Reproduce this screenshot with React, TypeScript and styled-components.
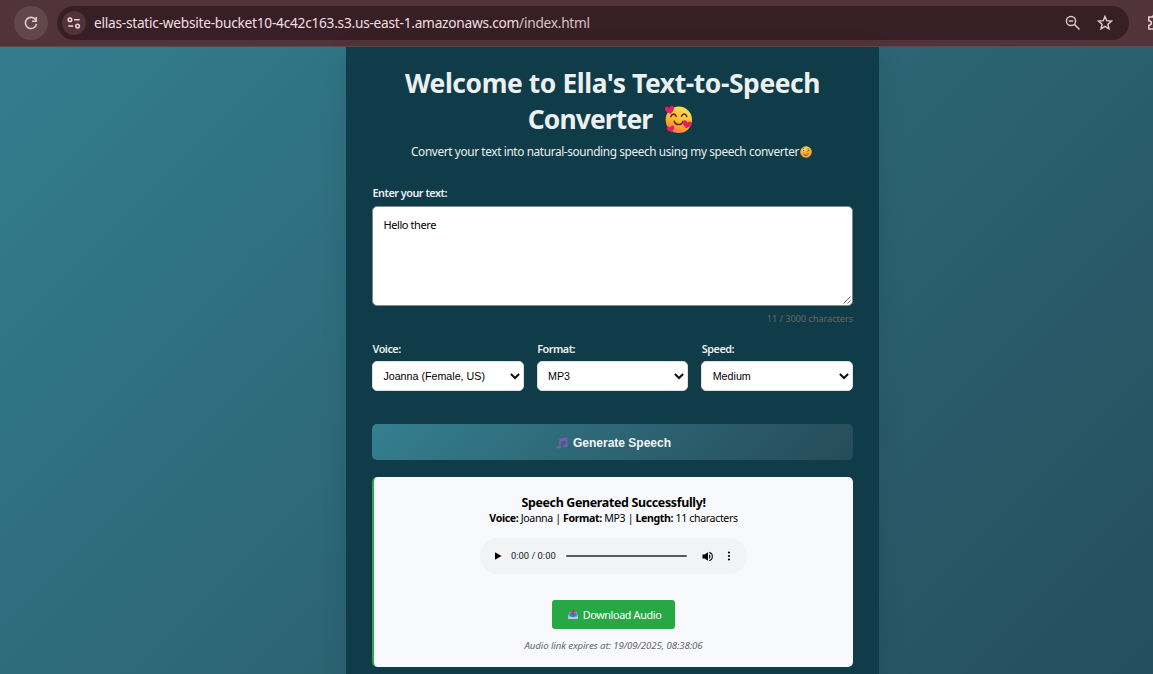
import React from "react";
import styled, { createGlobalStyle } from "styled-components";

const ui = `"Noto Sans", "Open Sans", sans-serif`;
const arial = `"Liberation Sans", Arial, sans-serif`;

const Global = createGlobalStyle`
  * { box-sizing: border-box; }
  html, body { margin: 0; height: 674px; overflow: hidden; }
  body { font-family: ${ui}; }
  h1, h2, p { margin: 0; }
  svg { display: block; flex: none; }
`;

const Window = styled.div`
  display: flex;
  flex-direction: column;
  width: 1153px;
  height: 674px;
  overflow: hidden;
`;

const Toolbar = styled.header`
  display: flex;
  align-items: center;
  height: 47px;
  flex: none;
  padding: 0 0 1px 14px;
  background: #503439;
  border-bottom: 1px solid #5a4a4e;
  overflow: hidden;
`;

const ReloadButton = styled.div`
  display: grid;
  place-items: center;
  width: 34px;
  height: 34px;
  flex: none;
  border-radius: 50%;
  background: #62484d;
`;

const AddressBar = styled.div`
  display: flex;
  align-items: center;
  width: 1072px;
  height: 34px;
  flex: none;
  margin-left: 9px;
  padding: 0 16px 0 5px;
  border-radius: 17px;
  background: #381f25;
`;

const SiteInfo = styled.div`
  display: grid;
  place-items: center;
  width: 24px;
  height: 24px;
  border-radius: 50%;
  background: #50343a;
`;

const Url = styled.div`
  flex: 1;
  margin-left: 8px;
  color: #f3dfe2;
  font-size: 13.7px;
  line-height: 20px;
  white-space: nowrap;
  letter-spacing: -0.25px;
  span { color: #d9c2c6; }
`;

const BarIcons = styled.div`
  display: flex;
  align-items: center;
  gap: 16px;
`;

const Extensions = styled.div`
  margin-left: 18px;
`;

const Page = styled.main`
  display: flex;
  flex: 1;
  min-height: 0;
  padding-left: 346px;
  background: linear-gradient(135deg, #337d8e 0%, #254c5a 100%) 0 0 / 1153px 705px;
`;

const Container = styled.section`
  width: 533px;
  height: 660px;
  flex: none;
  padding: 18px 26px 0;
  background: #0f3c48;
  box-shadow: 0 7px 26px rgba(0, 0, 0, 0.1);
`;

const Title = styled.h1`
  color: #ecf0f1;
  font-size: 26.4px;
  font-weight: 700;
  line-height: 36px;
`;

const Line = styled.div<{ $spacing: number }>`
  display: flex;
  justify-content: center;
  align-items: center;
  white-space: nowrap;
  letter-spacing: ${(p) => p.$spacing}px;
  svg { margin: 0 4px 0 12px; }
`;

const Subtitle = styled.p`
  display: flex;
  align-items: center;
  justify-content: center;
  height: 18px;
  margin: 5px 0 25px;
  padding-right: 2px;
  color: #ecf0f1;
  font-size: 11.8px;
  letter-spacing: -0.37px;
  white-space: nowrap;
  svg { margin: 1px 0 0 1px; }
`;

const Label = styled.label`
  display: block;
  height: 15px;
  padding-left: 0.5px;
  color: #ecf0f1;
  font-size: 10.8px;
  font-weight: 600;
  line-height: 15px;
  letter-spacing: -0.47px;
  white-space: nowrap;
`;

const TextBox = styled.div`
  display: flex;
  justify-content: space-between;
  width: 481px;
  height: 100px;
  margin-top: 6px;
  padding: 10px 1px 1px 10.5px;
  border: 1px solid #858585;
  border-radius: 5px;
  background: #fff;
  color: #000;
  font-size: 11px;
  line-height: 16px;
  letter-spacing: -0.42px;
  svg { align-self: flex-end; }
`;

const Counter = styled.div`
  height: 14px;
  margin-top: 6px;
  color: #666;
  font-size: 9.3px;
  line-height: 14px;
  text-align: right;
  letter-spacing: -0.1px;
`;

const Fields = styled.div`
  display: grid;
  grid-template-columns: repeat(3, 1fr);
  gap: 13px;
  margin-top: 15px;
`;

const Select = styled.div`
  display: flex;
  align-items: center;
  justify-content: space-between;
  height: 30px;
  margin-top: 5px;
  padding: 0 3px 0 10.4px;
  border: 1px solid #dde1e6;
  border-radius: 5px;
  background: #fff;
  color: #000;
  font: 10.7px/14px ${arial};
`;

const Generate = styled.div`
  display: flex;
  align-items: center;
  justify-content: center;
  gap: 5px;
  height: 36px;
  margin-top: 33px;
  padding: 2px 0 0 2px;
  border-radius: 5px;
  background: linear-gradient(135deg, #347f90, #264b58);
  color: #f2f6f7;
  font: 700 12px/16px ${arial};
`;

const Result = styled.section`
  display: flex;
  flex-direction: column;
  align-items: center;
  height: 190px;
  margin-top: 17px;
  padding-top: 18px;
  border-left: 2px solid #28a745;
  border-radius: 5px;
  background: #f8f9fc;
  color: #000;
`;

const ResultTitle = styled.h2`
  font-size: 12.4px;
  font-weight: 700;
  line-height: 16px;
  letter-spacing: -0.32px;
  white-space: nowrap;
`;

const Details = styled.p`
  font-size: 10.6px;
  line-height: 15px;
  letter-spacing: -0.37px;
  white-space: nowrap;
`;

const Player = styled.div`
  display: flex;
  align-items: center;
  width: 267px;
  height: 36px;
  margin-top: 12px;
  padding-left: 14px;
  border-radius: 18px;
  background: #f1f3f4;
  color: #222;
  font: 9.4px/12px Roboto, sans-serif;
`;

const Time = styled.span`
  width: 45px;
  margin-left: 9px;
  white-space: nowrap;
`;

const Track = styled.div`
  width: 121px;
  height: 2px;
  margin: 0 15px 0 10px;
  border-radius: 1px;
  background: #5b5b5d;
`;

const MoreDots = styled.div`
  margin-left: 13px;
`;

const Download = styled.div`
  display: flex;
  align-items: center;
  justify-content: center;
  gap: 5px;
  width: 123px;
  height: 29px;
  margin-top: 26px;
  padding-left: 2px;
  border-radius: 3px;
  background: #28a745;
  color: #fff;
  font-size: 10.8px;
  letter-spacing: -0.36px;
  white-space: nowrap;
`;

const Expiry = styled.p`
  margin-top: 9px;
  color: #666;
  font-size: 9.7px;
  font-style: italic;
  line-height: 15px;
  letter-spacing: -0.12px;
  white-space: nowrap;
`;

const Reload = () => (
  <svg width="18" height="18" viewBox="0 0 18 18" fill="none" stroke="#e9c6cc" strokeWidth="1.6">
    <path d="M13.8 6.1A5.6 5.6 0 1 0 14.5 9.8" />
    <path d="M14.2 3v4.2H10" />
  </svg>
);

const Tune = () => (
  <svg width="14" height="12" viewBox="0 0 14 12" fill="none" stroke="#eed5da" strokeWidth="1.5">
    <circle cx="3" cy="2.7" r="1.8" />
    <path d="M7 2.7h5.6M1.3 9.1h5" />
    <circle cx="10.6" cy="9.1" r="1.8" />
  </svg>
);

const ZoomOut = () => (
  <svg width="16" height="16" viewBox="0 0 16 16" fill="none" stroke="#d9c5c8" strokeWidth="1.5">
    <circle cx="6" cy="6" r="4.6" />
    <path d="M9.4 9.4l5.1 5.1M3.8 6h4.4" />
  </svg>
);

const Star = () => (
  <svg width="16" height="16" viewBox="0 0 16 16" fill="none" stroke="#e2ced1" strokeWidth="1.4">
    <path d="M8 1.4l1.75 4.3 4.75.4-3.6 3.05 1.1 4.6L8 11.3 4 13.75l1.1-4.6L1.5 6.1l4.75-.4z" />
  </svg>
);

const Puzzle = () => (
  <svg width="16" height="16" viewBox="0 0 16 16" fill="none" stroke="#f0ccd2" strokeWidth="1.5">
    <path d="M1.8 2h4a1.8 1.8 0 0 1 3.6 0H14v12H1.8v-3.6c3.4-.3 3.4-4.4 0-4.7z" />
  </svg>
);

const Grip = () => (
  <svg width="8" height="8" viewBox="0 0 8 8" stroke="#555" strokeWidth="0.9">
    <path d="M0.5 7.5l7-7M4.5 7.5l3-3" />
  </svg>
);

const Chevron = () => (
  <svg width="10" height="7" viewBox="0 0 10 7" fill="none" stroke="#111" strokeWidth="2">
    <path d="M0.9 1l4.1 4 4.1-4" />
  </svg>
);

const heart = "M0 2.2C-1.2-1-5.6.1-4.4 3.5-3.6 5.7-1.2 6.7 0 8 1.2 6.7 3.6 5.7 4.4 3.5 5.6.1 1.2-1 0 2.2z";

const LoveFace = () => (
  <svg width="29" height="29" viewBox="0 0 29 29">
    <defs>
      <linearGradient id="love" x1="0.75" y1="0" x2="0.3" y2="1">
        <stop offset="0" stopColor="#ffe35a" />
        <stop offset="0.55" stopColor="#ffb832" />
        <stop offset="1" stopColor="#f47b3c" />
      </linearGradient>
    </defs>
    <circle cx="14.8" cy="14.8" r="13.2" fill="url(#love)" />
    <g fill="none" stroke="#573129" strokeWidth="1.6" strokeLinecap="round">
      <path d="M7 11.5c.8-3 4-3.2 5.2-.2M17.5 11.2c1-3 4.4-2.8 5.2.3M10.2 16.2c1 4.2 7.4 4.6 8.8.2" />
    </g>
    <g fill="#e51d62">
      <path d={heart} transform="translate(5 1.1) rotate(-12)" />
      <path d={heart} transform="translate(24 15.6) rotate(14)" />
      <path d={heart} transform="translate(6 20.8) rotate(-14) scale(.85)" />
    </g>
  </svg>
);

const WinkFace = () => (
  <svg width="12" height="12" viewBox="0 0 12 12">
    <circle cx="6" cy="6" r="5.8" fill="#fba931" />
    <path d="M2 2.6A5.3 5.3 0 0 1 10.6 3L9 5H3z" fill="#ffcc45" />
    <circle cx="3.7" cy="4.7" r="1.4" fill="#fff3d8" />
    <circle cx="3.8" cy="4.8" r="0.8" fill="#4c302c" />
    <path d="M7.2 5.2l2.2-.9M2.7 2.6l1.7-.5M7.5 2.9l1.7.3" stroke="#68402c" strokeWidth="0.8" fill="none" />
    <path d="M3.3 7.4c1.3 1.1 4 1 5.2-.4-.1 3.6-4.5 3.7-5.2.4z" fill="#793028" />
    <path d="M4.4 8.1c1 .3 2.2.3 3.2-.2l-.4.9H5z" fill="#fff" />
  </svg>
);

const Notes = () => (
  <svg width="12" height="12" viewBox="0 0 12 12" fill="#7b5bad">
    <path d="M3.2 1.8L11.5.5v8H9.8V3.7l-4.9.8v5.4H3.2z" />
    <ellipse cx="2.9" cy="10" rx="2.2" ry="1.6" />
    <ellipse cx="9.4" cy="8.8" rx="2.1" ry="1.6" />
  </svg>
);

const Inbox = () => (
  <svg width="10" height="11" viewBox="0 0 11 11">
    <path d="M1.5 3h8l1.2 4v3.5H.3V7z" fill="#c6bfd5" />
    <path d="M1.5 3.5h8v4.9h-8z" fill="#2686d9" />
    <path d="M.3 7.8h2.8l.7 1h3.4l.7-1h2.8v2.7H.3z" fill="#c9c4dc" />
    <path d="M4.5 0h2v3.3h1.7L5.5 6.2 2.8 3.3h1.7z" fill="#df2865" />
  </svg>
);

const Play = () => (
  <svg width="8" height="8" viewBox="0 0 8 8"><path d="M1 .3L7.6 4 1 7.7z" fill="#000" /></svg>
);

const Volume = () => (
  <svg width="12" height="11" viewBox="0 0 12 11">
    <path d="M.5 3.6h2.2L6 1.2v8.6L2.7 7.4H.5z" fill="#000" />
    <path d="M7.1 3.2c1.8.8 1.8 3.8 0 4.6z" fill="#000" />
    <path d="M7.2 1.4c4.2 1.1 4.2 7.1 0 8.2" stroke="#111" strokeWidth="1.1" fill="none" />
  </svg>
);

const Dots = () => (
  <svg width="4" height="10" viewBox="0 0 4 10">
    <circle cx="2" cy="1.5" r="1.1" /><circle cx="2" cy="5" r="1.1" /><circle cx="2" cy="8.5" r="1.1" />
  </svg>
);

const fields = [
  { label: "Voice:", value: "Joanna (Female, US)" },
  { label: "Format:", value: "MP3" },
  { label: "Speed:", value: "Medium" },
];

export default function App() {
  return (
    <Window>
      <Global />
      <Toolbar>
        <ReloadButton><Reload /></ReloadButton>
        <AddressBar>
          <SiteInfo><Tune /></SiteInfo>
          <Url>ellas-static-website-bucket10-4c42c163.s3.us-east-1.amazonaws.com<span>/index.html</span></Url>
          <BarIcons><ZoomOut /><Star /></BarIcons>
        </AddressBar>
        <Extensions><Puzzle /></Extensions>
      </Toolbar>
      <Page>
        <Container>
          <Title>
            <Line $spacing={-0.4}>Welcome to Ella's Text-to-Speech</Line>
            <Line $spacing={-0.85}>Converter <LoveFace /></Line>
          </Title>
          <Subtitle>Convert your text into natural-sounding speech using my speech converter<WinkFace /></Subtitle>
          <Label>Enter your text:</Label>
          <TextBox>Hello there<Grip /></TextBox>
          <Counter>11 / 3000 characters</Counter>
          <Fields>
            {fields.map((f) => (
              <div key={f.label}>
                <Label>{f.label}</Label>
                <Select>{f.value}<Chevron /></Select>
              </div>
            ))}
          </Fields>
          <Generate><Notes />Generate Speech</Generate>
          <Result>
            <ResultTitle>Speech Generated Successfully!</ResultTitle>
            <Details><b>Voice:</b> Joanna | <b>Format:</b> MP3 | <b>Length:</b> 11 characters</Details>
            <Player>
              <Play />
              <Time>0:00 / 0:00</Time>
              <Track />
              <Volume />
              <MoreDots><Dots /></MoreDots>
            </Player>
            <Download><Inbox />Download Audio</Download>
            <Expiry>Audio link expires at: 19/09/2025, 08:38:06</Expiry>
          </Result>
        </Container>
      </Page>
    </Window>
  );
}
